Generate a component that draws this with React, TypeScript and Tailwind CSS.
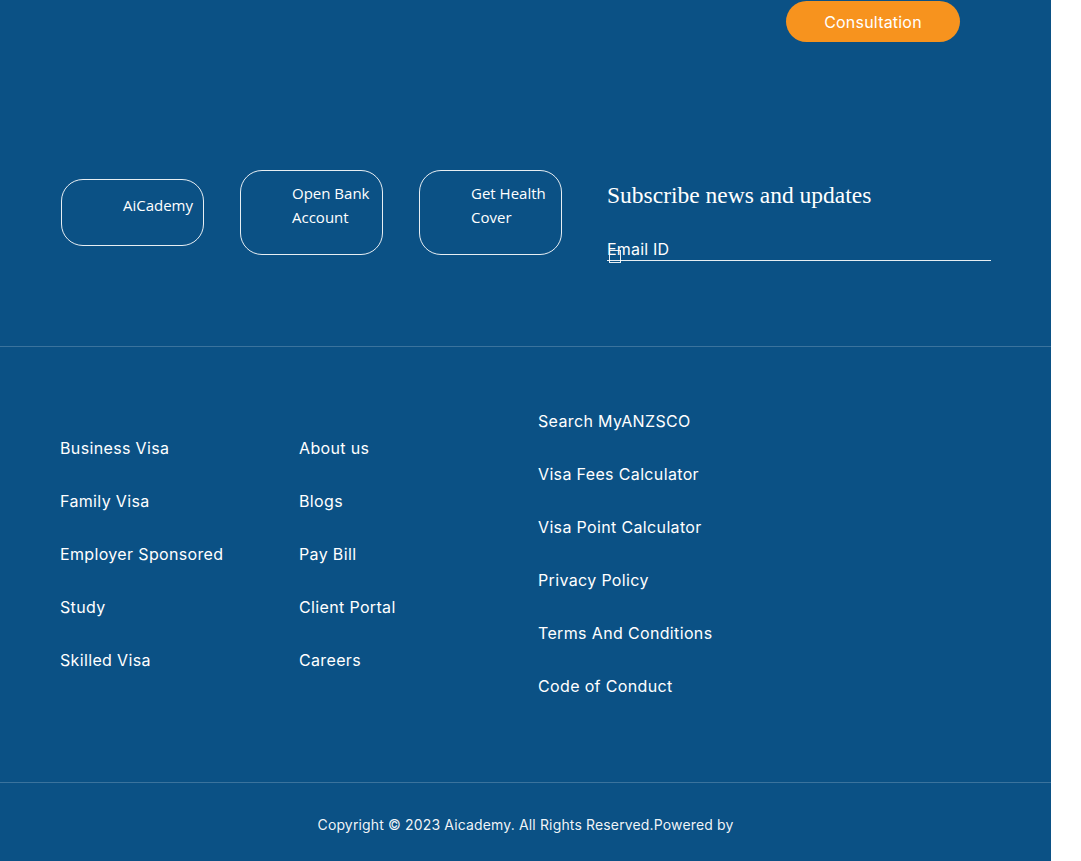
const serviceLinks = ['Business Visa', 'Family Visa', 'Employer Sponsored', 'Study', 'Skilled Visa']
const companyLinks = ['About us', 'Blogs', 'Pay Bill', 'Client Portal', 'Careers']
const toolLinks = [
  'Search MyANZSCO',
  'Visa Fees Calculator',
  'Visa Point Calculator',
  'Privacy Policy',
  'Terms And Conditions',
  'Code of Conduct',
]

function QuickBox({ lines, tall }: { lines: string[]; tall?: boolean }) {
  return (
    <a
      href="#"
      className={`${tall ? 'h-[85px] pt-[10px]' : 'h-[67px] pt-[13px]'} w-[143px] shrink-0 flex justify-end pr-[10px] rounded-[22px] border border-white/90 text-white text-[15px] leading-[24px] font-['Open_Sans',sans-serif]`}
    >
      <span className={tall ? 'w-[80px]' : ''}>
        {lines.map((l) => (
          <span key={l} className="block whitespace-nowrap">{l}</span>
        ))}
      </span>
    </a>
  )
}

function LinkColumn({ items, offset }: { items: string[]; offset?: boolean }) {
  return (
    <ul className={`w-[239px] shrink-0 flex flex-col gap-[29px] ${offset ? 'pt-[27px]' : ''}`}>
      {items.map((item) => (
        <li key={item}>
          <a href="#" className="text-white text-[16px] leading-[24px] tracking-[0.35px] whitespace-nowrap">{item}</a>
        </li>
      ))}
    </ul>
  )
}

export default function App() {
  return (
    <div className="flex min-h-[861px] bg-white">
      <footer className="w-[1051px] shrink-0 bg-[#0b5185] font-['Inter',sans-serif] text-white">
        {/* top: consultation + quick links + subscribe */}
        <div className="h-[347px] border-b border-white/20 flex flex-col">
          <div className="flex justify-end pr-[91px] pt-[1px]">
            <button className="h-[41px] w-[174px] rounded-full bg-[#f7931e] text-white text-[16px] tracking-[0.2px]">
              Consultation
            </button>
          </div>

          <div className="flex items-center pl-[61px] mt-[122px]">
            <div className="flex items-center gap-[36px]">
              <QuickBox lines={['AiCademy']} />
              <QuickBox lines={['Open Bank', 'Account']} tall />
              <QuickBox lines={['Get Health', 'Cover']} tall />
            </div>

            <div className="ml-[45px] w-[384px] mt-[16px]">
              <h3 className="font-['Liberation_Serif',serif] text-[23.5px] leading-[30px] text-white">
                Subscribe news and updates
              </h3>
              <div className="relative mt-[29px] border-b border-white/90 pb-[1px]">
                <span className="block text-[16px] leading-[20px] tracking-[0.2px] text-white">Email ID</span>
                <span className="absolute left-[2px] top-[11px] w-[12px] h-[13px] border border-white/90" />
              </div>
            </div>
          </div>
        </div>

        {/* link columns */}
        <div className="h-[436px] border-b border-white/20 flex pl-[60px] pt-[62px]">
          <LinkColumn items={serviceLinks} offset />
          <LinkColumn items={companyLinks} offset />
          <LinkColumn items={toolLinks} />
        </div>

        {/* copyright */}
        <div className="h-[78px] flex items-center justify-center pt-[4px]">
          <p className="text-[14px] tracking-[0.15px] text-white/95">Copyright © 2023 Aicademy. All Rights Reserved.Powered by</p>
        </div>
      </footer>
      <div className="flex-1" />
    </div>
  )
}
